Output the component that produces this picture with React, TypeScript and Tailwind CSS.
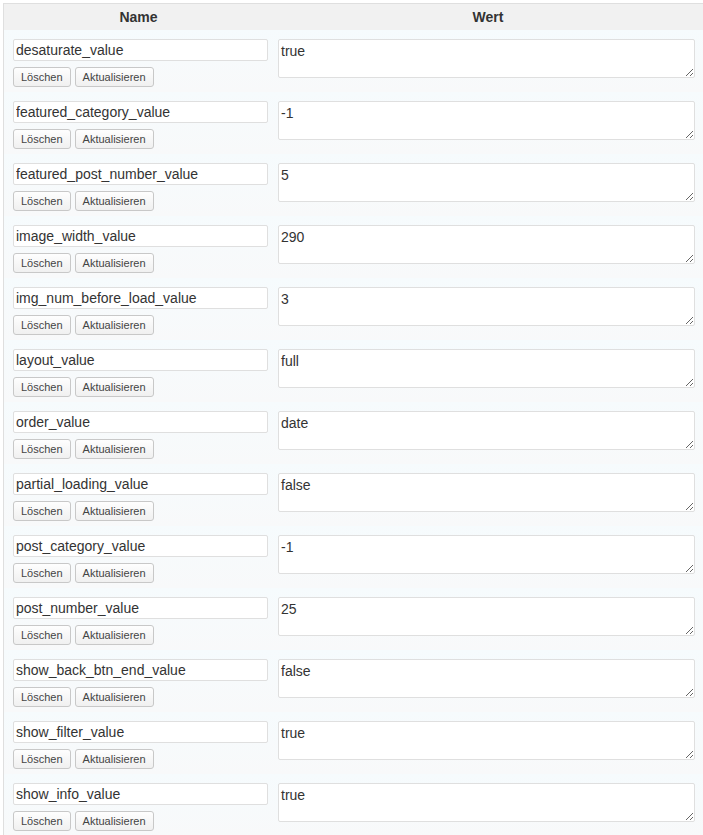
const fields: [string, string][] = [
  ["desaturate_value", "true"],
  ["featured_category_value", "-1"],
  ["featured_post_number_value", "5"],
  ["image_width_value", "290"],
  ["img_num_before_load_value", "3"],
  ["layout_value", "full"],
  ["order_value", "date"],
  ["partial_loading_value", "false"],
  ["post_category_value", "-1"],
  ["post_number_value", "25"],
  ["show_back_btn_end_value", "false"],
  ["show_filter_value", "true"],
  ["show_info_value", "true"],
];

function MetaButton({ label }: { label: string }) {
  return (
    <button
      type="button"
      className="h-[20px] rounded-[3px] border border-[#c8c8c8] bg-gradient-to-b from-[#fefefe] to-[#f0f0f0] px-[7px] text-[11px] leading-none text-[#444]"
    >
      {label}
    </button>
  );
}

function MetaRow({ name, value }: { name: string; value: string }) {
  return (
    <div className="flex h-[62px] bg-gradient-to-b from-[#f6fbfd] to-[#f8f9fa]">
      <div className="w-[269px] shrink-0 pl-[9px] pt-[9px]">
        <input
          type="text"
          defaultValue={name}
          className="block h-[22px] w-[255px] rounded-[2px] border border-[#dfdfdf] bg-white px-[2px] text-[14px] text-[#333] outline-none"
        />
        <div className="mt-[6px] flex gap-[4px]">
          <MetaButton label="Löschen" />
          <MetaButton label="Aktualisieren" />
        </div>
      </div>
      <div className="flex-1 pl-[5px] pr-[8px] pt-[9px]">
        <textarea
          defaultValue={value}
          className="block h-[39px] w-full rounded-[2px] border border-[#dfdfdf] bg-white px-[2px] py-[2px] text-[14px] leading-[18px] text-[#333] outline-none"
        />
      </div>
    </div>
  );
}

export default function App() {
  return (
    <div className="h-[835px] overflow-hidden bg-white pl-[3px] pt-[3px] font-['Liberation_Sans',Arial,sans-serif]">
      <div className="border-l border-t border-[#dfdfdf]">
        <div className="flex h-[26px] items-center bg-[#f1f1f1] text-[14px] font-bold text-[#333]">
          <div className="w-[269px] shrink-0 text-center">Name</div>
          <div className="flex-1 text-center">Wert</div>
        </div>
        {fields.map(([name, value]) => (
          <MetaRow key={name} name={name} value={value} />
        ))}
      </div>
    </div>
  );
}
